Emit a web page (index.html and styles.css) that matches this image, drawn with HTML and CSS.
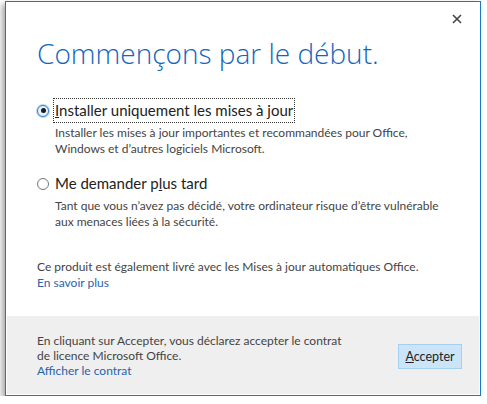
FILE: index.html
```html
<!DOCTYPE html>
<html lang="fr">
<head>
  <meta charset="UTF-8">
  <title>Microsoft Office</title>
  <link rel="stylesheet" href="styles.css">
</head>
<body>
  <div class="window">
    <div class="titlebar">
      <svg class="close" width="10" height="10" viewBox="0 0 10 10">
        <path d="M1 1 L9 9 M9 1 L1 9" stroke="#444" stroke-width="1.6" fill="none"/>
      </svg>
    </div>

    <div class="content">
      <h1>Commençons par le début.</h1>

      <div class="option">
        <label class="choice">
          <span class="radio checked"></span>
          <span class="choice-label focused"><u>I</u>nstaller uniquement les mises à jour</span>
        </label>
        <p class="desc">Installer les mises à jour importantes et recommandées pour Office,<br>Windows et d’autres logiciels Microsoft.</p>
      </div>

      <div class="option">
        <label class="choice">
          <span class="radio"></span>
          <span class="choice-label">Me demander p<u>l</u>us tard</span>
        </label>
        <p class="desc">Tant que vous n’avez pas décidé, votre ordinateur risque d’être vulnérable<br>aux menaces liées à la sécurité.</p>
      </div>

      <p class="note">Ce produit est également livré avec les Mises à jour automatiques Office.<br><a href="#">En savoir plus</a></p>
    </div>

    <div class="footer">
      <p class="terms">En cliquant sur Accepter, vous déclarez accepter le contrat<br>de licence Microsoft Office.<br><a href="#">Afficher le contrat</a></p>
      <button class="accept"><u>A</u>ccepter</button>
    </div>
  </div>
</body>
</html>
```

FILE: styles.css
```css
body {
  margin: 0;
  padding: 0;
  background-color: #fff;
  font-family: 'Lato', 'Open Sans', sans-serif;
  color: #333;
}

.window {
  margin: 1px 0 0 5px;
  width: 474px;
  height: 393px;
  border: 1px solid #1979ca;
  background: white;
  display: flex;
  flex-direction: column;
  box-shadow: -3px 3px 6px rgba(0,0,0,0.35);
}

.titlebar {
  display: flex;
  justify-content: flex-end;
  height: 30px;
  padding: 12px 18px 0 0;
  box-sizing: border-box;
}

.content {
  flex: 1;
  padding: 0 0 0 31px;
}

h1 {
  margin: 2px 0 26px 0;
  font-family: 'Open Sans', sans-serif;
  font-weight: 300;
  font-size: 28px;
  color: #1366bd;
  line-height: 38px;
}

.option {
  margin-bottom: 14px;
}

.choice {
  display: flex;
  align-items: center;
  gap: 4px;
}

.radio {
  width: 12px;
  height: 12px;
  border: 1px solid #777;
  border-radius: 50%;
  box-sizing: border-box;
  position: relative;
}

.radio.checked {
  border-color: #3b7fc4;
  background: #e8f2fc;
  box-shadow: 0 0 0 1px #b6d6f2;
}

.radio.checked::after {
  content: '';
  position: absolute;
  left: 2.5px;
  top: 2.5px;
  width: 5px;
  height: 5px;
  border-radius: 50%;
  background: #1b1b1b;
}

.choice-label {
  font-size: 15px;
  color: #222;
  padding: 1px 1px;
  line-height: 21px;
  border: 1px solid transparent;
}

.choice-label.focused {
  border: 1px dotted #333;
}

.desc {
  margin: 2px 0 0 18px;
  font-size: 12px;
  line-height: 16px;
  color: #444;
}

.note {
  margin: 29px 0 0 0;
  font-size: 12px;
  line-height: 16px;
  color: #444;
}

a {
  color: #2a64a8;
  text-decoration: none;
}

.footer {
  margin: 0 1px 1px 1px;
  height: 78px;
  background: #efefef;
  display: flex;
  align-items: center;
  justify-content: space-between;
  padding: 0 17px 0 30px;
}

.terms {
  margin: 0;
  font-size: 12px;
  line-height: 15px;
  color: #444;
}

.accept {
  width: 64px;
  height: 25px;
  margin-top: 2px;
  background: #cce4f7;
  border: 1px solid #a6d0f2;
  font-family: inherit;
  font-size: 12.5px;
  color: #222;
  padding: 0;
}
```
